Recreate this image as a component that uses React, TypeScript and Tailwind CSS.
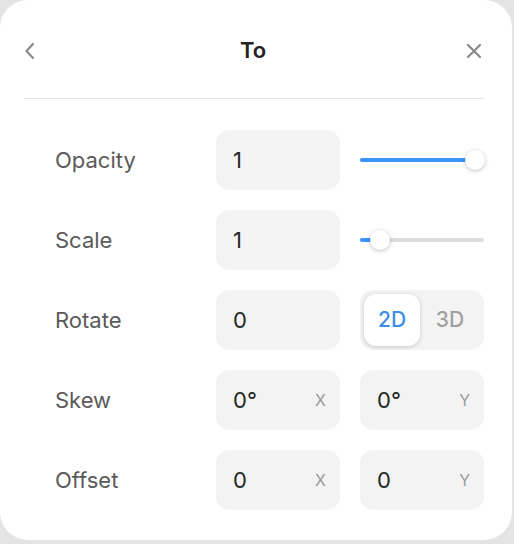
import { useState } from 'react';

function Field({ value, axis }: { value: string; axis?: string }) {
  return (
    <div className="flex h-[60px] w-[124px] items-center justify-between rounded-[14px] bg-[#f3f3f3] pl-[17px] pr-[14px]">
      <span className="text-[22px] text-[#262626]">{value}</span>
      {axis && <span className="text-[16px] text-[#9a9a9a]">{axis}</span>}
    </div>
  );
}

function Slider({ percent }: { percent: number }) {
  return (
    <div className="relative flex h-[60px] w-[124px] items-center">
      <div className="h-[4px] w-full rounded-full bg-[#dcdcdc]">
        <div
          className="h-full rounded-full bg-[#3b96f5]"
          style={{ width: `${percent}%` }}
        />
      </div>
      <div
        className="absolute top-1/2 h-[20px] w-[20px] -translate-x-1/2 -translate-y-1/2 rounded-full bg-white shadow-[0_1px_4px_rgba(0,0,0,0.25)]"
        style={{ left: `${percent}%` }}
      />
    </div>
  );
}

function Row({ label, children }: { label: string; children: React.ReactNode }) {
  return (
    <div className="flex items-center">
      <div className="w-[192px] shrink-0 pl-[31px] text-[22px] text-[#5a5a5a]">{label}</div>
      <div className="flex gap-[20px]">{children}</div>
    </div>
  );
}

export default function App() {
  const [mode, setMode] = useState('2D');

  return (
    <div
      className="h-[544px] w-[514px] bg-[#e4e4e4] pr-[2px]"
      style={{ fontFamily: 'Inter, "Noto Sans", sans-serif' }}
    >
      <div className="h-[540px] w-[512px] rounded-[28px] bg-white pl-[24px] pr-[28px]">
        <div className="flex h-[99px] items-center justify-between border-b border-[#e6e6e6] pt-[3px]">
          <button type="button" className="flex h-[20px] w-[20px] items-center text-[#8a8a8a]">
            <svg width="12" height="18" viewBox="0 0 12 18" fill="none">
              <path d="M9 2L2.5 9L9 16" stroke="currentColor" strokeWidth="2.2" strokeLinecap="round" strokeLinejoin="round" />
            </svg>
          </button>
          <h3 className="text-[22px] font-semibold text-[#222]">To</h3>
          <button type="button" className="mr-[2px] flex h-[20px] w-[20px] items-center justify-end text-[#8a8a8a]">
            <svg width="16" height="16" viewBox="0 0 16 16" fill="none">
              <path d="M2 2L14 14M14 2L2 14" stroke="currentColor" strokeWidth="2.2" strokeLinecap="round" />
            </svg>
          </button>
        </div>

        <div className="flex flex-col gap-[20px] pt-[31px]">
          <Row label="Opacity">
            <Field value="1" />
            <Slider percent={93} />
          </Row>
          <Row label="Scale">
            <Field value="1" />
            <Slider percent={16} />
          </Row>
          <Row label="Rotate">
            <Field value="0" />
            <div className="flex h-[60px] w-[124px] items-center rounded-[14px] bg-[#f3f3f3] p-[4px]">
              {['2D', '3D'].map((m) => (
                <button
                  key={m}
                  type="button"
                  onClick={() => setMode(m)}
                  className={
                    mode === m
                      ? 'flex h-full w-[56px] items-center justify-center rounded-[12px] bg-white text-[21px] font-medium text-[#3a8ee8] shadow-[0_1px_4px_rgba(0,0,0,0.18)]'
                      : 'flex h-full flex-1 items-center justify-center text-[21px] font-medium text-[#a0a0a0]'
                  }
                >
                  {m}
                </button>
              ))}
            </div>
          </Row>
          <Row label="Skew">
            <Field value="0°" axis="X" />
            <Field value="0°" axis="Y" />
          </Row>
          <Row label="Offset">
            <Field value="0" axis="X" />
            <Field value="0" axis="Y" />
          </Row>
        </div>
      </div>
    </div>
  );
}
